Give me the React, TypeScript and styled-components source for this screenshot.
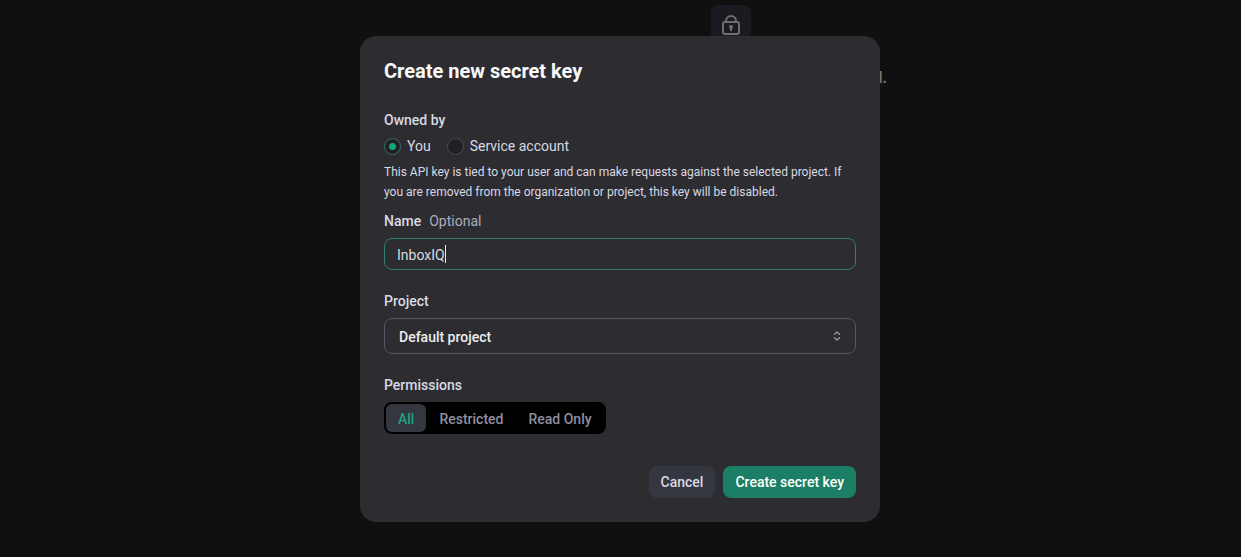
import React, { useState } from 'react';
import styled, { createGlobalStyle } from 'styled-components';

const GlobalStyle = createGlobalStyle`
  *, *::before, *::after { box-sizing: border-box; }
  body {
    margin: 0;
    background: #101010;
    color: #d9d9e3;
    font: 400 14px/20px Roboto, "Liberation Sans", sans-serif;
  }
  button, input, select { font: inherit; color: inherit; }
`;

const Page = styled.main`
  display: flex;
  flex-direction: column;
  align-items: center;
  min-height: 100vh;
  padding: 5px 0 0 221px;
`;

const IconTile = styled.div`
  display: grid;
  place-items: center;
  width: 40px;
  height: 40px;
  border-radius: 8px;
  background: #1a1b20;
  color: #6f6f72;
`;

const Notice = styled.p`
  width: 312px;
  margin: 23px 0 0;
  color: #75756a;
  font-size: 16px;
  font-weight: 700;
  text-align: right;
`;

const Overlay = styled.div`
  position: fixed;
  inset: 0;
  display: flex;
  align-items: center;
  justify-content: center;
  padding: 1px 1px 0 0;
`;

const Dialog = styled.form`
  display: flex;
  flex-direction: column;
  width: 520px;
  max-width: 100%;
  padding: 24px;
  border-radius: 16px;
  background: #2c2c31;
`;

const Title = styled.h1`
  margin: 0 0 28px;
  color: #f9f9fa;
  font-size: 20px;
  font-weight: 700;
  line-height: 22px;
`;

const Group = styled.fieldset`
  min-width: 0;
  margin: 0;
  padding: 0;
  border: 0;
`;

const Legend = styled.legend`
  padding: 0;
  font-weight: 500;
`;

const Radios = styled.div`
  display: flex;
  gap: 16px;
  margin-top: 6px;
`;

const RadioLabel = styled.label`
  display: flex;
  align-items: center;
  gap: 6px;
`;

const Radio = styled.input`
  appearance: none;
  display: grid;
  place-items: center;
  width: 17px;
  height: 17px;
  margin: 0;
  border: 1px solid #4b4b5a;
  border-radius: 50%;
  background: #202123;

  &:checked { border-color: #3b6f6d; }
  &:checked::before {
    content: "";
    width: 7px;
    height: 7px;
    border-radius: 50%;
    background: #10a37f;
  }
`;

const Help = styled.p`
  margin: 6px 0 9px;
  font-size: 12px;
`;

const Label = styled.label`
  font-weight: 500;
`;

const Optional = styled.span`
  margin-left: 8px;
  color: #acacbe;
  font-weight: 400;
`;

const TextBox = styled.div`
  display: flex;
  align-items: center;
  height: 32px;
  margin: 7px 0 21px;
  padding: 0 12px;
  border: 1px solid #347d74;
  border-radius: 8px;
`;

const TextInput = styled.input`
  field-sizing: content;
  min-width: 1px;
  max-width: 100%;
  padding: 2px 0 0;
  border: 0;
  outline: 0;
  background: none;
  caret-color: transparent;
`;

const Caret = styled.span`
  width: 1px;
  height: 18px;
  background: #ececf1;
`;

const SelectBox = styled.div`
  display: grid;
  align-items: center;
  margin: 7px 0 21px;
`;

const Select = styled.select`
  grid-area: 1 / 1;
  appearance: none;
  width: 100%;
  height: 36px;
  padding: 2px 36px 0 14px;
  border: 1px solid #565869;
  border-radius: 8px;
  outline: 0;
  background: transparent;
  color: #ececf1;
  font-weight: 500;
`;

const SelectIcon = styled.svg`
  grid-area: 1 / 1;
  justify-self: end;
  margin-right: 15px;
  color: #9a9aab;
  pointer-events: none;
`;

const Segments = styled.div`
  display: inline-flex;
  gap: 1px;
  height: 32px;
  margin-top: 7px;
  padding: 2px;
  border-radius: 8px;
  background: #000;
`;

const Segment = styled.button<{ $active: boolean }>`
  padding: 2px 12px 0;
  border: 0;
  border-radius: 6px;
  background: ${(p) => (p.$active ? '#353740' : 'transparent')};
  color: ${(p) => (p.$active ? '#19a37f' : '#8e8ea0')};
  font-weight: 500;
`;

const Actions = styled.div`
  display: flex;
  justify-content: flex-end;
  gap: 8px;
  margin-top: 32px;
`;

const Button = styled.button<{ $primary?: boolean }>`
  height: 32px;
  padding: 0 12px;
  border: 0;
  border-radius: 8px;
  background: ${(p) => (p.$primary ? '#1a7f64' : '#353740')};
  color: ${(p) => (p.$primary ? '#fff' : '#d9d9e3')};
  font-weight: 500;
`;

const permissions = ['All', 'Restricted', 'Read Only'];

export default function App() {
  const [name, setName] = useState('InboxIQ');
  const [permission, setPermission] = useState('All');

  return (
    <>
      <GlobalStyle />
      <Page>
        <IconTile>
          <svg width="20" height="22" viewBox="0 0 20 22" fill="none" stroke="currentColor" strokeWidth="2" aria-hidden="true">
            <rect x="2" y="8" width="16" height="12" rx="2" />
            <path d="M5 8V7a5 5 0 0 1 10 0v1" />
            <circle cx="10" cy="13" r="2" fill="currentColor" stroke="none" />
            <path d="M10 13v4" />
          </svg>
        </IconTile>
        <Notice>l.</Notice>
      </Page>
      <Overlay>
        <Dialog role="dialog" aria-labelledby="dialog-title" onSubmit={(e) => e.preventDefault()}>
          <Title id="dialog-title">Create new secret key</Title>
          <Group>
            <Legend>Owned by</Legend>
            <Radios>
              <RadioLabel>
                <Radio type="radio" name="owner" defaultChecked />
                You
              </RadioLabel>
              <RadioLabel>
                <Radio type="radio" name="owner" />
                Service account
              </RadioLabel>
            </Radios>
          </Group>
          <Help>
            This API key is tied to your user and can make requests against the selected project. If
            you are removed from the organization or project, this key will be disabled.
          </Help>
          <Label htmlFor="key-name">
            Name<Optional>Optional</Optional>
          </Label>
          <TextBox>
            <TextInput id="key-name" value={name} onChange={(e) => setName(e.target.value)} />
            <Caret />
          </TextBox>
          <Label htmlFor="project">Project</Label>
          <SelectBox>
            <Select id="project">
              <option>Default project</option>
            </Select>
            <SelectIcon width="8" height="10" viewBox="0 0 8 10" fill="none" stroke="currentColor" strokeWidth="1.3" strokeLinecap="round" strokeLinejoin="round" aria-hidden="true">
              <path d="M1.5 3.2 4 1l2.5 2.2M1.5 6.8 4 9l2.5-2.2" />
            </SelectIcon>
          </SelectBox>
          <Group>
            <Legend>Permissions</Legend>
            <Segments>
              {permissions.map((p) => (
                <Segment key={p} type="button" $active={p === permission} aria-pressed={p === permission} onClick={() => setPermission(p)}>
                  {p}
                </Segment>
              ))}
            </Segments>
          </Group>
          <Actions>
            <Button type="button">Cancel</Button>
            <Button type="submit" $primary>Create secret key</Button>
          </Actions>
        </Dialog>
      </Overlay>
    </>
  );
}
